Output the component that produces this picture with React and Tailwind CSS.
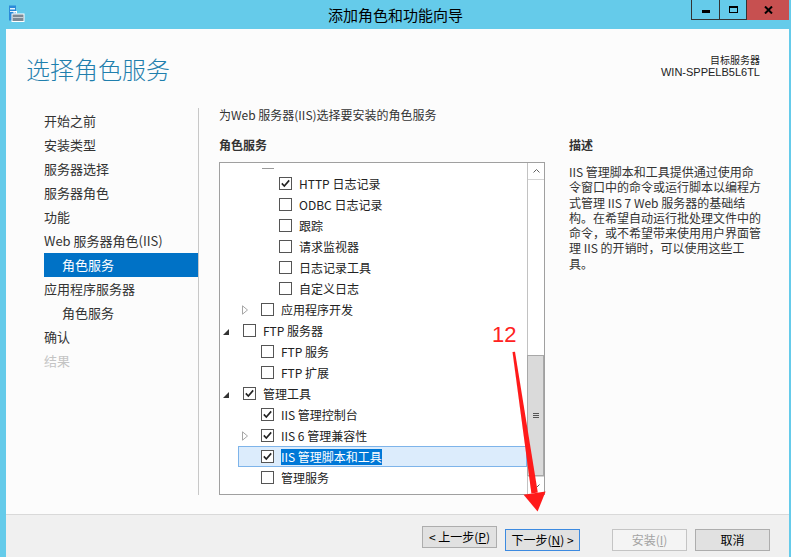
import React from 'react';

const navItems = [
  { label: '开始之前' },
  { label: '安装类型' },
  { label: '服务器选择' },
  { label: '服务器角色' },
  { label: '功能' },
  { label: 'Web 服务器角色(IIS)' },
  { label: '角色服务', sub: true, active: true },
  { label: '应用程序服务器' },
  { label: '角色服务', sub: true },
  { label: '确认' },
  { label: '结果', disabled: true },
];

const rows = [
  { label: 'HTTP 日志记录', level: 2, checked: true },
  { label: 'ODBC 日志记录', level: 2 },
  { label: '跟踪', level: 2 },
  { label: '请求监视器', level: 2 },
  { label: '日志记录工具', level: 2 },
  { label: '自定义日志', level: 2 },
  { label: '应用程序开发', level: 1, expander: 'closed' },
  { label: 'FTP 服务器', level: 0, expander: 'open' },
  { label: 'FTP 服务', level: 1 },
  { label: 'FTP 扩展', level: 1 },
  { label: '管理工具', level: 0, expander: 'open', checked: true },
  { label: 'IIS 管理控制台', level: 1, checked: true },
  { label: 'IIS 6 管理兼容性', level: 1, expander: 'closed', checked: true },
  { label: 'IIS 管理脚本和工具', level: 1, checked: true, selected: true },
  { label: '管理服务', level: 1 },
];

const levelPad = ['pl-0', 'pl-[18px]', 'pl-[36px]'];

const descLines = [
  'IIS 管理脚本和工具提供通过使用命',
  '令窗口中的命令或运行脚本以编程方',
  '式管理 IIS 7 Web 服务器的基础结',
  '构。在希望自动运行批处理文件中的',
  '命令，或不希望带来使用用户界面管',
  '理 IIS 的开销时，可以使用这些工',
  '具。',
];

const CheckBox = ({ checked }) => (
  <span className="w-[13px] h-[13px] border border-[#555] bg-white flex items-center justify-center shrink-0">
    {checked && (
      <svg width="11" height="11" viewBox="0 0 11 11">
        <path d="M1.8 5.4 L4.3 8 L9.2 2.4" stroke="#222" strokeWidth="1.6" fill="none" />
      </svg>
    )}
  </span>
);

const Expander = ({ kind }) => {
  if (kind === 'open')
    return (
      <svg width="6" height="6" viewBox="0 0 6 6" className="mt-[3px]">
        <polygon points="6,0 6,6 0,6" fill="#333" />
      </svg>
    );
  if (kind === 'closed')
    return (
      <svg width="7" height="10" viewBox="0 0 7 10" className="ml-[1px]">
        <path d="M0.5 0.8 L5.5 5 L0.5 9.2 Z" stroke="#a6a6a6" fill="none" />
      </svg>
    );
  return null;
};

const Button = ({ children, primary, disabled }) => (
  <button
    className={
      primary
        ? 'w-[75px] h-[22px] border border-[#3c8ae0] bg-[#e1e1e1] text-[12px] leading-[20px] text-black'
        : disabled
        ? 'w-[75px] h-[22px] border border-[#c4c4c4] bg-[#f4f4f4] text-[12px] leading-[20px] text-[#a3a3a3]'
        : 'w-[75px] h-[22px] border border-[#adadad] bg-[#e1e1e1] text-[12px] leading-[20px] text-black'
    }
  >
    {children}
  </button>
);

export default function App() {
  return (
    <div className="w-[791px] h-[557px] overflow-hidden bg-[#65cbea] flex flex-col relative font-['Noto_Sans_CJK_SC',sans-serif] text-[#333]">
      {/* Title bar */}
      <div className="h-[29px] grid grid-cols-[1fr_auto_1fr] shrink-0">
        <div className="pl-[8px] pt-[5px]">
          <svg width="17" height="18" viewBox="0 0 17 18">
            <rect x="1" y="0.5" width="7" height="15" fill="#2b8ad8" />
            <rect x="2" y="3" width="5" height="1.5" fill="#e6f3fb" />
            <rect x="2" y="6" width="5" height="1" fill="#e6f3fb" />
            <rect x="6" y="6.5" width="2.5" height="1.5" fill="none" stroke="#fff" strokeWidth="1" />
            <rect x="3.5" y="8.5" width="13" height="8.5" fill="#fff" />
            <rect x="4.5" y="9.5" width="11" height="6.5" fill="#7c8a96" />
            <rect x="4.5" y="12" width="11" height="1" fill="#c8d0d6" />
          </svg>
        </div>
        <div className="text-[15px] leading-[29px] text-black whitespace-nowrap">添加角色和功能向导</div>
        <div className="flex justify-end items-start pr-[2px]">
          <div className="w-[28px] h-[20px] border-l border-b border-[#333] flex items-end justify-center pb-[6px]">
            <span className="w-[8px] h-[3px] bg-black" />
          </div>
          <div className="w-[27px] h-[20px] border-l border-b border-[#333] flex items-center justify-center">
            <span className="w-[9px] h-[7px] border border-black border-t-[2px]" />
          </div>
          <div className="w-[43px] h-[20px] bg-[#c75050] border-l border-[#333] flex items-center justify-center">
            <svg width="9" height="8" viewBox="0 0 9 8">
              <path d="M1 0.5 L8 7.5 M8 0.5 L1 7.5" stroke="#000" strokeWidth="2" />
            </svg>
          </div>
        </div>
      </div>

      {/* Body */}
      <div className="flex-1 ml-[6px] mr-[2px] bg-[#fcfcfc] flex flex-col">
        <div className="h-[78px] flex justify-between pl-[20px] pr-[29px] pt-[24px] shrink-0">
          <h1 className="text-[24px] leading-[32px] font-light text-[#1f7fad]">选择角色服务</h1>
          <div className="text-right text-[#222]">
            <div className="text-[10px] leading-[13px]">目标服务器</div>
            <div className="text-[11px] leading-[13px] font-['Liberation_Sans',sans-serif]">WIN-SPPELB5L6TL</div>
          </div>
        </div>

        <div className="h-[407px] flex shrink-0">
          {/* Left navigation */}
          <div className="w-[192px] pt-[2px] pl-[38px] text-[13px] shrink-0">
            {navItems.map((item, i) => (
              <div
                key={i}
                className={
                  'h-[24px] leading-[24px] whitespace-nowrap ' +
                  (item.sub ? 'pl-[18px] ' : '') +
                  (item.active ? 'bg-[#0072c6] text-white' : item.disabled ? 'text-[#c4c4c4]' : 'text-[#333]')
                }
              >
                {item.label}
              </div>
            ))}
          </div>
          <div className="w-px h-[387px] mt-[1px] bg-[#c8c8c8] shrink-0" />

          {/* Content */}
          <div className="flex pl-[20px]">
            <div className="w-[326px] shrink-0">
              <div className="text-[12px] leading-[16px]">为Web 服务器(IIS)选择要安装的角色服务</div>
              <div className="mt-[14px] text-[12px] leading-[16px] font-bold">角色服务</div>
              <div className="mt-[9px] h-[333px] border border-[#a0a0a0] bg-white flex">
                <div className="flex-1 overflow-hidden">
                  <div className="h-[10px] pl-[42px] pt-[5px]">
                    <div className="w-[12px] h-px bg-[#9a9a9a]" />
                  </div>
                  {rows.map((r, i) => (
                    <div key={i} className={'h-[21px] flex ' + levelPad[r.level]}>
                      <div
                        className={
                          'flex-1 flex items-center pl-[3px] ' +
                          (r.selected ? 'bg-[#dcecfc] shadow-[inset_0_0_0_1px_#7eb4ea]' : '')
                        }
                      >
                        <span className="w-[20px] flex items-center shrink-0">
                          <Expander kind={r.expander} />
                        </span>
                        <CheckBox checked={r.checked} />
                        <span
                          className={
                            'ml-[7px] text-[12px] leading-[16px] whitespace-nowrap ' +
                            (r.selected ? 'bg-[#0078d7] text-white' : 'text-[#222]')
                          }
                        >
                          {r.label}
                        </span>
                      </div>
                    </div>
                  ))}
                </div>
                {/* Scrollbar */}
                <div className="w-[17px] border-l border-[#c2c2c2] flex flex-col shrink-0">
                  <div className="h-[17px] border-b border-[#d4d4d4] flex items-center justify-center">
                    <svg width="7" height="4" viewBox="0 0 7 4">
                      <path d="M0.5 3.5 L3.5 0.5 L6.5 3.5" stroke="#606060" fill="none" />
                    </svg>
                  </div>
                  <div className="h-[175px]" />
                  <div className="h-[121px] bg-[#dadada] border border-[#a8a8a8] -ml-px flex flex-col items-center justify-center gap-[1px]">
                    <span className="w-[6px] h-px bg-[#555]" />
                    <span className="w-[6px] h-px bg-[#555]" />
                    <span className="w-[6px] h-px bg-[#555]" />
                  </div>
                  <div className="flex-1 border-t border-[#d4d4d4] flex items-center justify-center">
                    <svg width="7" height="4" viewBox="0 0 7 4">
                      <path d="M0.5 0.5 L3.5 3.5 L6.5 0.5" stroke="#606060" fill="none" />
                    </svg>
                  </div>
                </div>
              </div>
            </div>

            {/* Description */}
            <div className="ml-[24px] w-[200px] pt-[30px] text-[12px]">
              <div className="leading-[16px] font-bold">描述</div>
              <p className="mt-[11px] leading-[15.3px] text-[#333] whitespace-nowrap">
                {descLines.map((l, i) => (
                  <React.Fragment key={i}>
                    {l}
                    {i < descLines.length - 1 && <br />}
                  </React.Fragment>
                ))}
              </p>
            </div>
          </div>
        </div>

        {/* Footer */}
        <div className="flex-1 border-t border-[#d9d9d9] bg-[#f0f0f0] flex justify-end items-start pt-[11px] pr-[19px]">
          <Button>&lt; 上一步(<span className="underline">P</span>)</Button>
          <div className="ml-[8px]">
            <Button primary>下一步(<span className="underline">N</span>) &gt;</Button>
          </div>
          <div className="ml-[32px]">
            <Button disabled>安装(<span className="underline">I</span>)</Button>
          </div>
          <div className="ml-[8px]">
            <Button>取消</Button>
          </div>
        </div>
      </div>

      {/* Red annotation */}
      <div className="absolute left-[492px] top-[324px] text-[22px] leading-[22px] text-[#ff2222] font-['Liberation_Sans',sans-serif]">12</div>
      <svg className="absolute left-0 top-0 pointer-events-none" width="791" height="557" viewBox="0 0 791 557">
        <polygon points="512.5,352 515,351.7 537.8,492.6 531.4,493.5" fill="#ff1a1a" />
        <polygon points="523.6,494.8 545.6,491.4 537.6,511.5" fill="#ff1a1a" />
      </svg>
    </div>
  );
}
